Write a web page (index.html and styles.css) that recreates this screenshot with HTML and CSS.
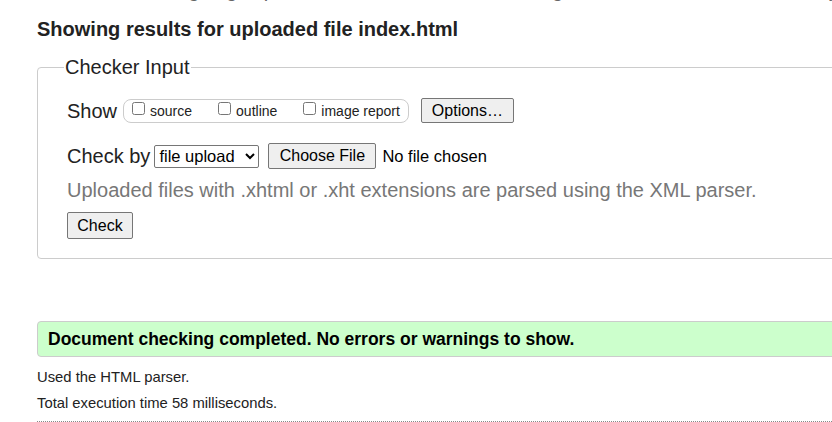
FILE: index.html
```html
<!DOCTYPE html>
<html lang="en">
<head>
<meta charset="utf-8">
<title>Showing results for uploaded file index.html - Nu Html Checker</title>
<link rel="stylesheet" href="styles.css">
</head>
<body>
<div class="page">
  <p class="intro">This tool is an ongoing experiment in better HTML checking, and its behavior remains subject to change</p>
  <h2 class="title">Showing results for uploaded file index.html</h2>
  <fieldset class="checker">
    <legend class="legend">Checker Input</legend>
    <div class="row show-row">
      <span class="label">Show</span>
      <span class="opts">
        <label class="opt"><input type="checkbox" class="cb"><span>source</span></label>
        <label class="opt"><input type="checkbox" class="cb"><span>outline</span></label>
        <label class="opt"><input type="checkbox" class="cb"><span>image report</span></label>
      </span>
      <button type="button" class="btn options">Options…</button>
    </div>
    <div class="row check-row">
      <span class="label">Check by</span>
      <select class="sel"><option>file upload</option></select>
      <button type="button" class="btn choose">Choose File</button>
      <span class="nofile">No file chosen</span>
    </div>
    <p class="hint">Uploaded files with .xhtml or .xht extensions are parsed using the XML parser.</p>
    <div class="row submit-row"><button type="button" class="btn check">Check</button></div>
  </fieldset>
  <p class="success">Document checking completed. No errors or warnings to show.</p>
  <p class="details">Used the HTML parser.</p>
  <p class="details">Total execution time 58 milliseconds.</p>
  <div class="rule"></div>
</div>
</body>
</html>
```
FILE: styles.css
```css
html, body {
  margin: 0;
  padding: 0;
  background: #fff;
  overflow: hidden;
}
body {
  font-family: "Liberation Sans", Arial, sans-serif;
  color: #222;
}
.page {
  margin-left: 37px;
  margin-right: -40px;
  display: flex;
  flex-direction: column;
}
.intro {
  margin: -21px 0 0 0;
  font-size: 20px;
  line-height: 23px;
  color: #666;
  white-space: nowrap;
}
.title {
  margin: 15px 0 0 0;
  font-size: 20px;
  line-height: 24px;
  font-weight: bold;
  color: #222;
}
.checker {
  margin: 15px 0 0 0;
  padding: 20px 0 19px 29px;
  border: 1px solid #ccc;
  border-radius: 4px;
  min-width: 0;
}
.legend {
  margin-left: -3px;
  padding: 0 1px;
  font-size: 20px;
  line-height: 22px;
  color: #222;
}
.row {
  display: flex;
  align-items: center;
}
.label {
  font-size: 20px;
  line-height: 24px;
  color: #222;
}
.show-row .label { margin-right: 6px; }
.opts {
  display: flex;
  align-items: center;
  height: 22px;
  border: 1px solid #ccc;
  border-radius: 8px;
  padding: 0 8px 0 5px;
  gap: 23px;
}
.opt {
  display: flex;
  align-items: center;
  font-size: 14px;
  color: #222;
}
.cb {
  margin: 0 5px 4px 3px;
  width: 13px;
  height: 13px;
}
.btn {
  font-family: "Liberation Sans", Arial, sans-serif;
  font-size: 16px;
  color: #000;
  background: #efefef;
  border: 1px solid #767676;
  border-radius: 2px;
  padding: 0 8px;
  height: 25px;
}
.options { margin-left: 12px; width: 93px; }
.check-row { margin-top: 20px; }
.check-row .label { margin-right: 4px; }
.sel {
  font-family: "Liberation Sans", Arial, sans-serif;
  font-size: 16.5px;
  height: 23px;
  width: 105px;
  color: #000;
  border: 1px solid #767676;
  border-radius: 2px;
  background: #fff;
}
.choose { margin-left: 9px; width: 108px; height: 26px; }
.nofile { margin-left: 6px; font-size: 16.5px; color: #000; }
.hint {
  margin: 9px 0 0 0;
  font-size: 20px;
  line-height: 24px;
  color: #777;
}
.submit-row { margin-top: 10px; }
.check { width: 66px; height: 27px; }
.success {
  margin: 62px 0 0 0;
  padding: 6px 10px;
  background: #ccffcc;
  border: 1px solid #ccc;
  border-radius: 4px;
  font-size: 17.5px;
  line-height: 22px;
  font-weight: bold;
  color: #000;
}
.details {
  margin: 12px 0 0 0;
  font-size: 14.8px;
  line-height: 16px;
  color: #222;
}
.details + .details { margin-top: 10px; }
.rule {
  margin-top: 10px;
  border-top: 1px dotted #888;
}
```
